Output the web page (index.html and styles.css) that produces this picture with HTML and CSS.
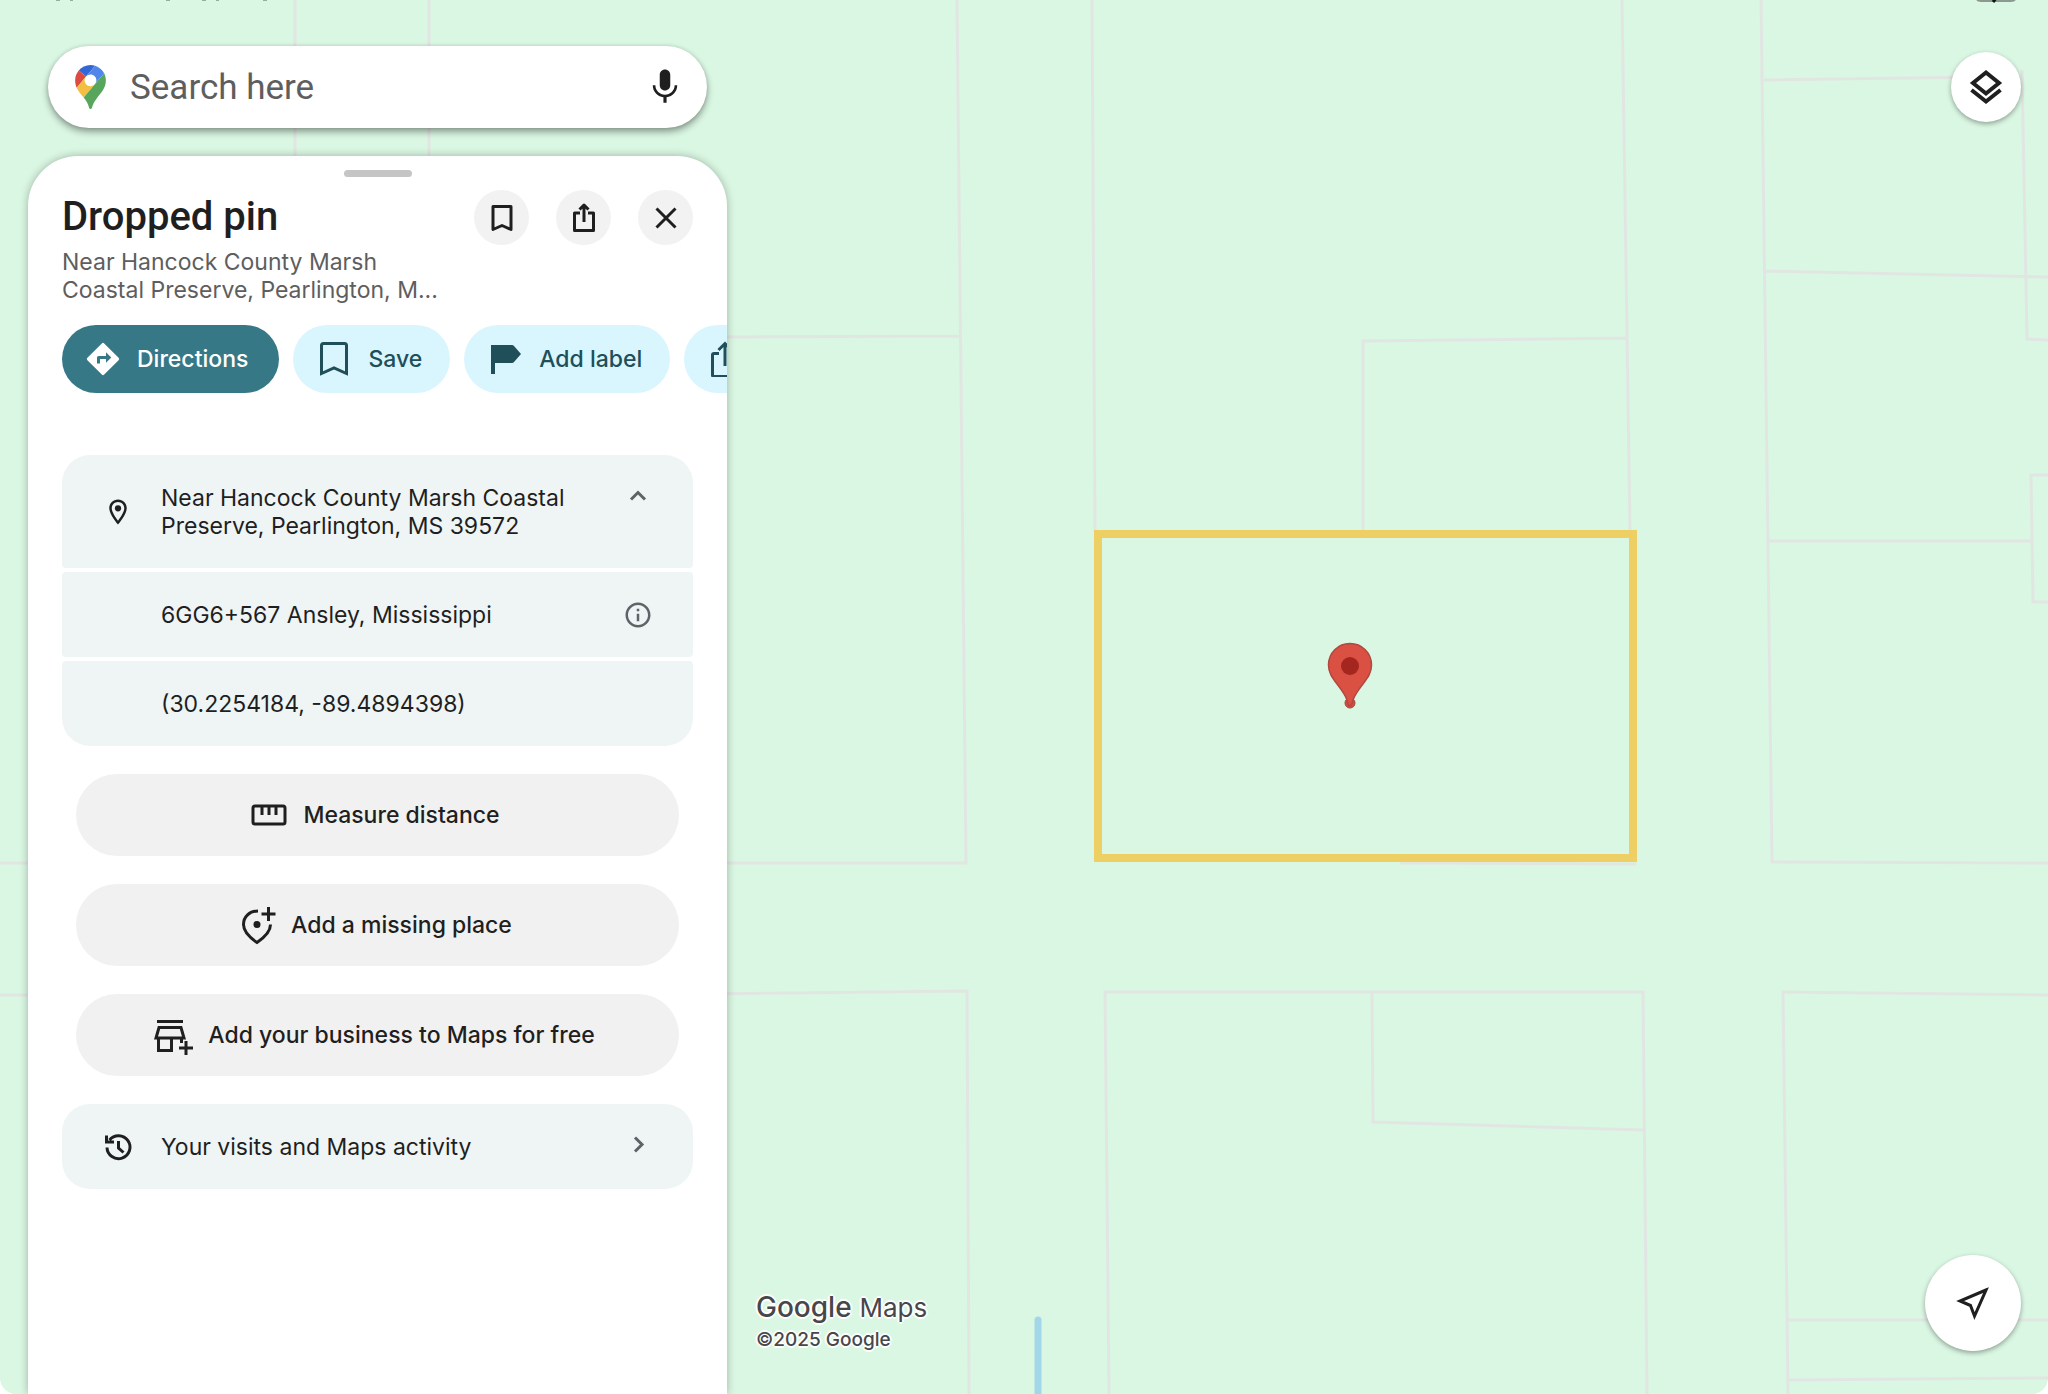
FILE: index.html
```html
<!DOCTYPE html>
<html lang="en">
<head>
<meta charset="utf-8">
<meta name="viewport" content="width=device-width, initial-scale=1">
<title>Dropped pin - Google Maps</title>
<link rel="stylesheet" href="styles.css">
</head>
<body>
<svg class="map" viewBox="0 0 2048 1394" preserveAspectRatio="xMidYMid slice" aria-hidden="true">
  <!-- parcel boundaries -->
  <g fill="none" stroke="#e1e6e3" stroke-width="3">
    <path d="M295 0V170M429 0V170"/>
    <path d="M957 0L966 863H700M700 337L960 336"/>
    <path d="M1092 0L1095 532M1622 0L1630 532M1363 532V341L1628 338"/>
    <path d="M1761 0L1772 862L2048 863M1764 80L1990 77M1765 271L2048 277M1768 541H2031"/>
    <path d="M2022 70L2027 339L2048 340M2048 475H2031L2033 602H2048"/>
    <path d="M0 863H40M0 995H40M700 994L967 991L969 1394"/>
    <path d="M1109 1394L1105 992H1643L1647 1394M1372 992L1373 1122L1644 1130"/>
    <path d="M2048 995L1783 992L1788 1394M1786 1320H2048M1788 1380L2048 1378M1400 863L1636 864"/>
  </g>
  <path d="M1038 1320V1400" stroke="#a1d7e8" stroke-width="7" stroke-linecap="round"/>
  <rect x="1098" y="534" width="535" height="324" fill="none" stroke="#eecf63" stroke-width="8"/>
  <!-- dropped pin -->
  <circle cx="1350" cy="703" r="5" fill="#d04c40" stroke="#a8443b" stroke-width="1"/>
  <path d="M1350 643.500c12 0 21.500 9.500 21.500 21.500 0 8-4 13-8.500 19-5 6.500-8.500 11-10 16-.8 3-1.500 6-3 6s-2.200-3-3-6c-1.500-5-5-9.500-10-16-4.500-6-8.500-11-8.500-19 0-12 9.500-21.500 21.500-21.500z" fill="#da5144" stroke="#b0493f" stroke-width="1.500"/>
  <circle cx="1350" cy="666" r="9" fill="#a4261e"/>
  <!-- lower edge of the device status bar -->
  <path d="M1976-4c0 4 2 5 5 5h30c3 0 5-1 5-5" fill="none" stroke="#8b9a90" stroke-width="2"/>
  <path d="M1997-3l-4 5" stroke="#111" stroke-width="3"/>
  <path d="M56 0h4M70 0h3M166 0h4M202 0h4M216 0h3M263 0h4" stroke="#98ad9f" stroke-width="2"/>
</svg>

<main class="app">
  <div class="side">
    <form class="search" role="search">
      <svg class="search-logo" viewBox="0 0 92.300 132.300" aria-hidden="true">
        <path fill="#3367d6" d="M60.200 2.200C55.800.8 51 0 46.100 0 32 0 19.300 6.400 10.800 16.500l21.800 18.300L60.200 2.200z"/>
        <path fill="#db4b3f" d="M10.800 16.500C4.100 24.500 0 34.900 0 46.100c0 8.700 1.700 15.700 4.600 22l28-33.300-21.800-18.300z"/>
        <path fill="#5086ec" d="M46.200 28.500c9.800 0 17.700 7.900 17.700 17.700 0 4.300-1.600 8.300-4.200 11.400 0 0 13.900-16.600 27.500-32.700-5.600-10.800-15.300-19-27-22.700L32.600 34.800c3.300-3.800 8.100-6.300 13.600-6.300"/>
        <path fill="#f2bf42" d="M46.200 63.800c-9.800 0-17.700-7.900-17.700-17.700 0-4.300 1.500-8.300 4.100-11.300l-28 33.300c4.800 10.600 12.800 19.200 21 29.900l34.100-40.500c-3.300 3.900-8.100 6.300-13.500 6.300"/>
        <path fill="#58a55c" d="M59.100 109.200c15.400-24.100 33.300-35 33.300-63 0-7.700-1.900-14.900-5.200-21.300L25.600 98c2.600 3.400 5.300 7.300 7.900 11.300 9.400 14.500 6.800 23.100 12.800 23.100s3.400-8.700 12.800-23.200"/>
      </svg>
      <input class="search-input" type="search" placeholder="Search here" aria-label="Search here">
      <button class="plain" type="button" aria-label="Voice search">
        <svg class="icon-xl" viewBox="0 0 24 24"><path d="M12 14c1.660 0 3-1.340 3-3V5c0-1.660-1.340-3-3-3S9 3.340 9 5v6c0 1.660 1.340 3 3 3zm5.500-3c0 3-2.500 5.400-5.500 5.400S6.500 14 6.500 11H5c0 3.530 2.610 6.430 6.100 6.920V21h1.800v-3.080C16.390 17.430 19 14.530 19 11h-1.500z"/></svg>
      </button>
    </form>

    <section class="sheet" aria-labelledby="place-title">
      <div class="handle"></div>
      <header class="head">
        <div class="head-text">
          <h1 class="title" id="place-title">Dropped pin</h1>
          <p class="subtitle">Near Hancock County Marsh<br>Coastal Preserve, Pearlington, M...</p>
        </div>
        <div class="head-actions">
          <button class="round" type="button" aria-label="Save">
            <svg class="icon-lg" viewBox="0 0 36 36"><path class="line" d="M9 6.500h18v23L18 25.500l-9 4z" stroke-linejoin="round"/></svg>
          </button>
          <button class="round" type="button" aria-label="Share">
            <svg class="icon-lg" viewBox="0 0 36 36"><path class="line" d="M14 13H8.500v17.500h19V13H22M18 22V5M13.500 9.500L18 5l4.500 4.500" stroke-linejoin="round"/></svg>
          </button>
          <button class="round" type="button" aria-label="Close">
            <svg class="icon-lg" viewBox="0 0 36 36"><path class="line" d="M8.500 8.500l19 19M27.500 8.500l-19 19"/></svg>
          </button>
        </div>
      </header>

      <div class="chips">
        <button class="chip chip-main" type="button">
          <svg class="icon-lg" viewBox="0 0 24 24"><path d="M22.400 11.200L12.800 1.600a1.100 1.100 0 0 0-1.600 0L1.600 11.200a1.100 1.100 0 0 0 0 1.600l9.600 9.600a1.100 1.100 0 0 0 1.600 0l9.600-9.600a1.100 1.100 0 0 0 0-1.600zM14 14.500V12h-4v3H8v-4a1 1 0 0 1 1-1h5V7.500l3.500 3.500-3.500 3.500z"/></svg>
          Directions
        </button>
        <button class="chip" type="button">
          <svg class="icon-lg" viewBox="0 0 36 36"><path class="line" d="M5.500 32.500V4.500a2 2 0 0 1 2-2h21a2 2 0 0 1 2 2v28L18 27z"/></svg>
          Save
        </button>
        <button class="chip" type="button">
          <svg class="icon-lg" viewBox="0 0 36 36"><path d="M4 4h21a3 3 0 0 1 2 1l7 8-7 8a3 3 0 0 1-2 1H8v11H4z"/></svg>
          Add label
        </button>
        <button class="chip" type="button" aria-label="Share">
          <svg class="icon-lg" viewBox="0 0 36 36"><path class="line" d="M12 12.500H7a1.500 1.500 0 0 0-1.500 1.500v20a1.500 1.500 0 0 0 1.500 1.500h22a1.500 1.500 0 0 0 1.500-1.500V14a1.500 1.500 0 0 0-1.500-1.500H24M18 25V3M11.500 9L18 2.500 24.500 9"/></svg>
        </button>
      </div>

      <div class="cards">
        <button class="row row-tall" type="button" aria-expanded="true">
          <svg class="icon" viewBox="0 0 24 24"><path d="M12 2C8.100 2 5 5.100 5 9c0 5.300 7 13 7 13s7-7.700 7-13c0-3.900-3.100-7-7-7zM7 9c0-2.800 2.200-5 5-5s5 2.200 5 5c0 2.900-2.900 7.200-5 9.900C9.900 16.200 7 11.900 7 9z"/><circle cx="12" cy="9" r="2.500"/></svg>
          <span class="row-text">Near Hancock County Marsh Coastal<br>Preserve, Pearlington, MS 39572</span>
          <svg class="icon icon-muted icon-top" viewBox="0 0 30 30"><path class="line" d="M8 18.500l7-7 7 7"/></svg>
        </button>
        <div class="row">
          <span class="icon"></span>
          <span class="row-text">6GG6+567 Ansley, Mississippi</span>
          <button class="plain" type="button" aria-label="About plus codes">
            <svg class="icon icon-muted" viewBox="0 0 24 24"><path d="M11 7h2v2h-2zm0 4h2v6h-2zm1-9C6.480 2 2 6.480 2 12s4.480 10 10 10 10-4.480 10-10S17.520 2 12 2zm0 18c-4.400 0-8-3.600-8-8s3.600-8 8-8 8 3.600 8 8-3.600 8-8 8z"/></svg>
          </button>
        </div>
        <div class="row">
          <span class="icon"></span>
          <span class="row-text">(30.2254184, -89.4894398)</span>
        </div>
      </div>

      <div class="actions">
        <button class="action" type="button">
          <svg class="icon-lg" viewBox="0 0 36 36"><path class="line" d="M4 9h28a2 2 0 0 1 2 2v14a2 2 0 0 1-2 2H4a2 2 0 0 1-2-2V11a2 2 0 0 1 2-2zM11 9v9M18 9v9M25 9v9"/></svg>
          Measure distance
        </button>
        <button class="action" type="button">
          <svg class="icon-lg icon-open" viewBox="0 0 36 36"><path class="line" d="M19 4C10.500 4 4.500 10 4.500 17.500c0 6 4 11.500 13.500 18 9.500-6.500 13.500-12 13.500-18M29.500 0v14M22.500 7h14"/><circle cx="18" cy="17.500" r="3.500"/></svg>
          Add a missing place
        </button>
        <button class="action" type="button">
          <svg class="icon-lg icon-open" viewBox="0 0 36 36"><path class="line" d="M1 4.500h26M3 10.500h22l3 10.500H0zM2.500 21v12.500h13V21M25.500 21v5M30 24v14M23 31h14"/></svg>
          Add your business to Maps for free
        </button>
      </div>

      <div class="cards">
        <button class="row" type="button">
          <svg class="icon" viewBox="0 0 30 30"><path class="line" d="M4 15.500A11.500 11.500 0 1 0 6.500 8M3.500 3.500v6.500H11M15.500 9v7l5 4.500"/></svg>
          <span class="row-text">Your visits and Maps activity</span>
          <svg class="icon icon-muted" viewBox="0 0 30 30"><path class="line" d="M12 5.500l7 7-7 7"/></svg>
        </button>
      </div>
    </section>
  </div>

  <footer class="credit">
    <div class="brand"><span class="brand-google">Google</span> <span class="brand-maps">Maps</span></div>
    <small class="copyright">©2025 Google</small>
  </footer>

  <div class="controls">
    <button class="fab" type="button" aria-label="Layers">
      <svg class="icon-lg" viewBox="0 0 36 36"><path class="line-bold" d="M18 3.500L31 14 18 24.500 5 14zM3.500 21L18 32.500 32.500 21"/></svg>
    </button>
    <button class="fab fab-large" type="button" aria-label="Your location">
      <svg class="icon-lg" viewBox="0 0 36 36"><path class="line" d="M31 5L5 16l10.500 4.500 4 10.500z"/></svg>
    </button>
  </div>
</main>
</body>
</html>
```
FILE: styles.css
```css
* {
  box-sizing: border-box;
}

body {
  margin: 0;
  background: #fff;
  color: #1f1f1f;
  font-family: Inter, "Liberation Sans", sans-serif;
  font-size: 23px;
  line-height: 28px;
}

button {
  border: 0;
  padding: 0;
  background: none;
  color: inherit;
  font: inherit;
  cursor: pointer;
}

svg {
  display: block;
  fill: currentColor;
}

.map {
  position: absolute;
  inset: 0;
  width: 100%;
  height: 100%;
  background: #daf7e3;
  border-radius: 0 0 16px 16px;
}

.app {
  position: relative;
  display: flex;
  min-height: 100vh;
}

.side {
  display: flex;
  flex-direction: column;
  gap: 28px;
  width: 699px;
  margin-left: 28px;
  padding-top: 46px;
}

/* icons */
.icon {
  flex: none;
  width: 30px;
  height: 30px;
}

.icon-lg {
  flex: none;
  width: 36px;
  height: 36px;
}

.icon-xl {
  width: 42px;
  height: 42px;
}

.icon-open {
  overflow: visible;
}

.icon-muted {
  color: #5f6368;
}

.icon-top {
  align-self: flex-start;
}

.line,
.line-bold {
  fill: none;
  stroke: currentColor;
  stroke-width: 3px;
}

.line-bold {
  stroke-width: 4px;
}

/* search */
.search {
  display: flex;
  align-items: center;
  height: 82px;
  margin: 0 20px;
  padding: 0 21px 0 27px;
  border-radius: 41px;
  background: #fff;
  box-shadow: 0 4px 7px rgba(0, 0, 0, 0.36), 0 0 4px rgba(0, 0, 0, 0.12);
}

.search-logo {
  width: 31px;
  height: 44px;
}

.search-input {
  flex: 1;
  min-width: 0;
  margin: 0 20px 0 24px;
  padding: 0;
  border: 0;
  outline: 0;
  background: none;
  font-family: Roboto, sans-serif;
  font-size: 35px;
}

.search-input::placeholder {
  color: #5e5e5e;
  opacity: 1;
}

/* place sheet */
.sheet {
  flex: 1;
  overflow: hidden;
  padding: 14px 34px 40px;
  border-radius: 50px 50px 0 0;
  background: #fff;
  box-shadow: 0 0 8px rgba(0, 0, 0, 0.28);
}

.handle {
  width: 68px;
  height: 7px;
  margin: 0 auto;
  border-radius: 4px;
  background: #c5c5c5;
}

.head {
  display: flex;
  justify-content: space-between;
  padding-top: 13px;
}

.title {
  margin: 0 0 4px;
  font-family: Roboto, sans-serif;
  font-size: 40px;
  font-weight: 500;
  line-height: 54px;
}

.subtitle {
  margin: 0;
  color: #5e5e5e;
}

.head-actions {
  display: flex;
  gap: 27px;
}

.round {
  display: grid;
  place-items: center;
  width: 55px;
  height: 55px;
  border-radius: 50%;
  background: #f2f2f2;
}

.chips {
  display: flex;
  gap: 14px;
  padding-top: 21px;
}

.chip {
  display: flex;
  flex: none;
  align-items: center;
  gap: 16px;
  height: 68px;
  padding: 0 28px 0 23px;
  border-radius: 34px;
  background: #d9f6fe;
  color: #204f59;
  font-weight: 500;
}

.chip-main {
  padding-right: 31px;
  background: #377887;
  color: #fff;
}

.cards {
  display: grid;
  gap: 4px;
}

.chips + .cards {
  padding-top: 62px;
}

.row {
  display: flex;
  align-items: center;
  width: 100%;
  min-height: 85px;
  padding: 14px 40px 14px 41px;
  border-radius: 4px;
  background: #eff5f5;
  text-align: left;
}

.row-tall {
  min-height: 113px;
  padding-top: 26px;
  padding-bottom: 26px;
}

.row:first-child {
  border-top-left-radius: 28px;
  border-top-right-radius: 28px;
}

.row:last-child {
  border-bottom-left-radius: 28px;
  border-bottom-right-radius: 28px;
}

.row-text {
  flex: 1;
  padding-left: 28px;
}

.actions {
  display: grid;
  gap: 28px;
  padding: 28px 14px;
}

.action {
  display: flex;
  align-items: center;
  justify-content: center;
  gap: 16px;
  height: 82px;
  padding-right: 4px;
  border-radius: 41px;
  background: #f1f1f1;
  font-weight: 500;
}

/* map overlay */
.credit {
  align-self: flex-end;
  padding: 0 0 40px 29px;
  color: #47474a;
  text-shadow: 0 0 3px #fff, 2px 0 1px #fff, -2px 0 1px #fff, 0 2px 1px #fff, 0 -2px 1px #fff;
}

.brand {
  font-size: 28px;
  line-height: 36px;
}

.brand-google {
  font-weight: 500;
}

.brand-maps {
  font-size: 26px;
}

.copyright {
  display: block;
  font-size: 19px;
  font-weight: 500;
}

.controls {
  display: flex;
  flex-direction: column;
  align-items: flex-end;
  justify-content: space-between;
  margin-left: auto;
  padding: 52px 27px 43px 0;
}

.fab {
  display: grid;
  place-items: center;
  width: 70px;
  height: 70px;
  border-radius: 50%;
  background: #fff;
  box-shadow: 0 2px 5px rgba(0, 0, 0, 0.35);
}

.fab-large {
  width: 96px;
  height: 96px;
}
```
